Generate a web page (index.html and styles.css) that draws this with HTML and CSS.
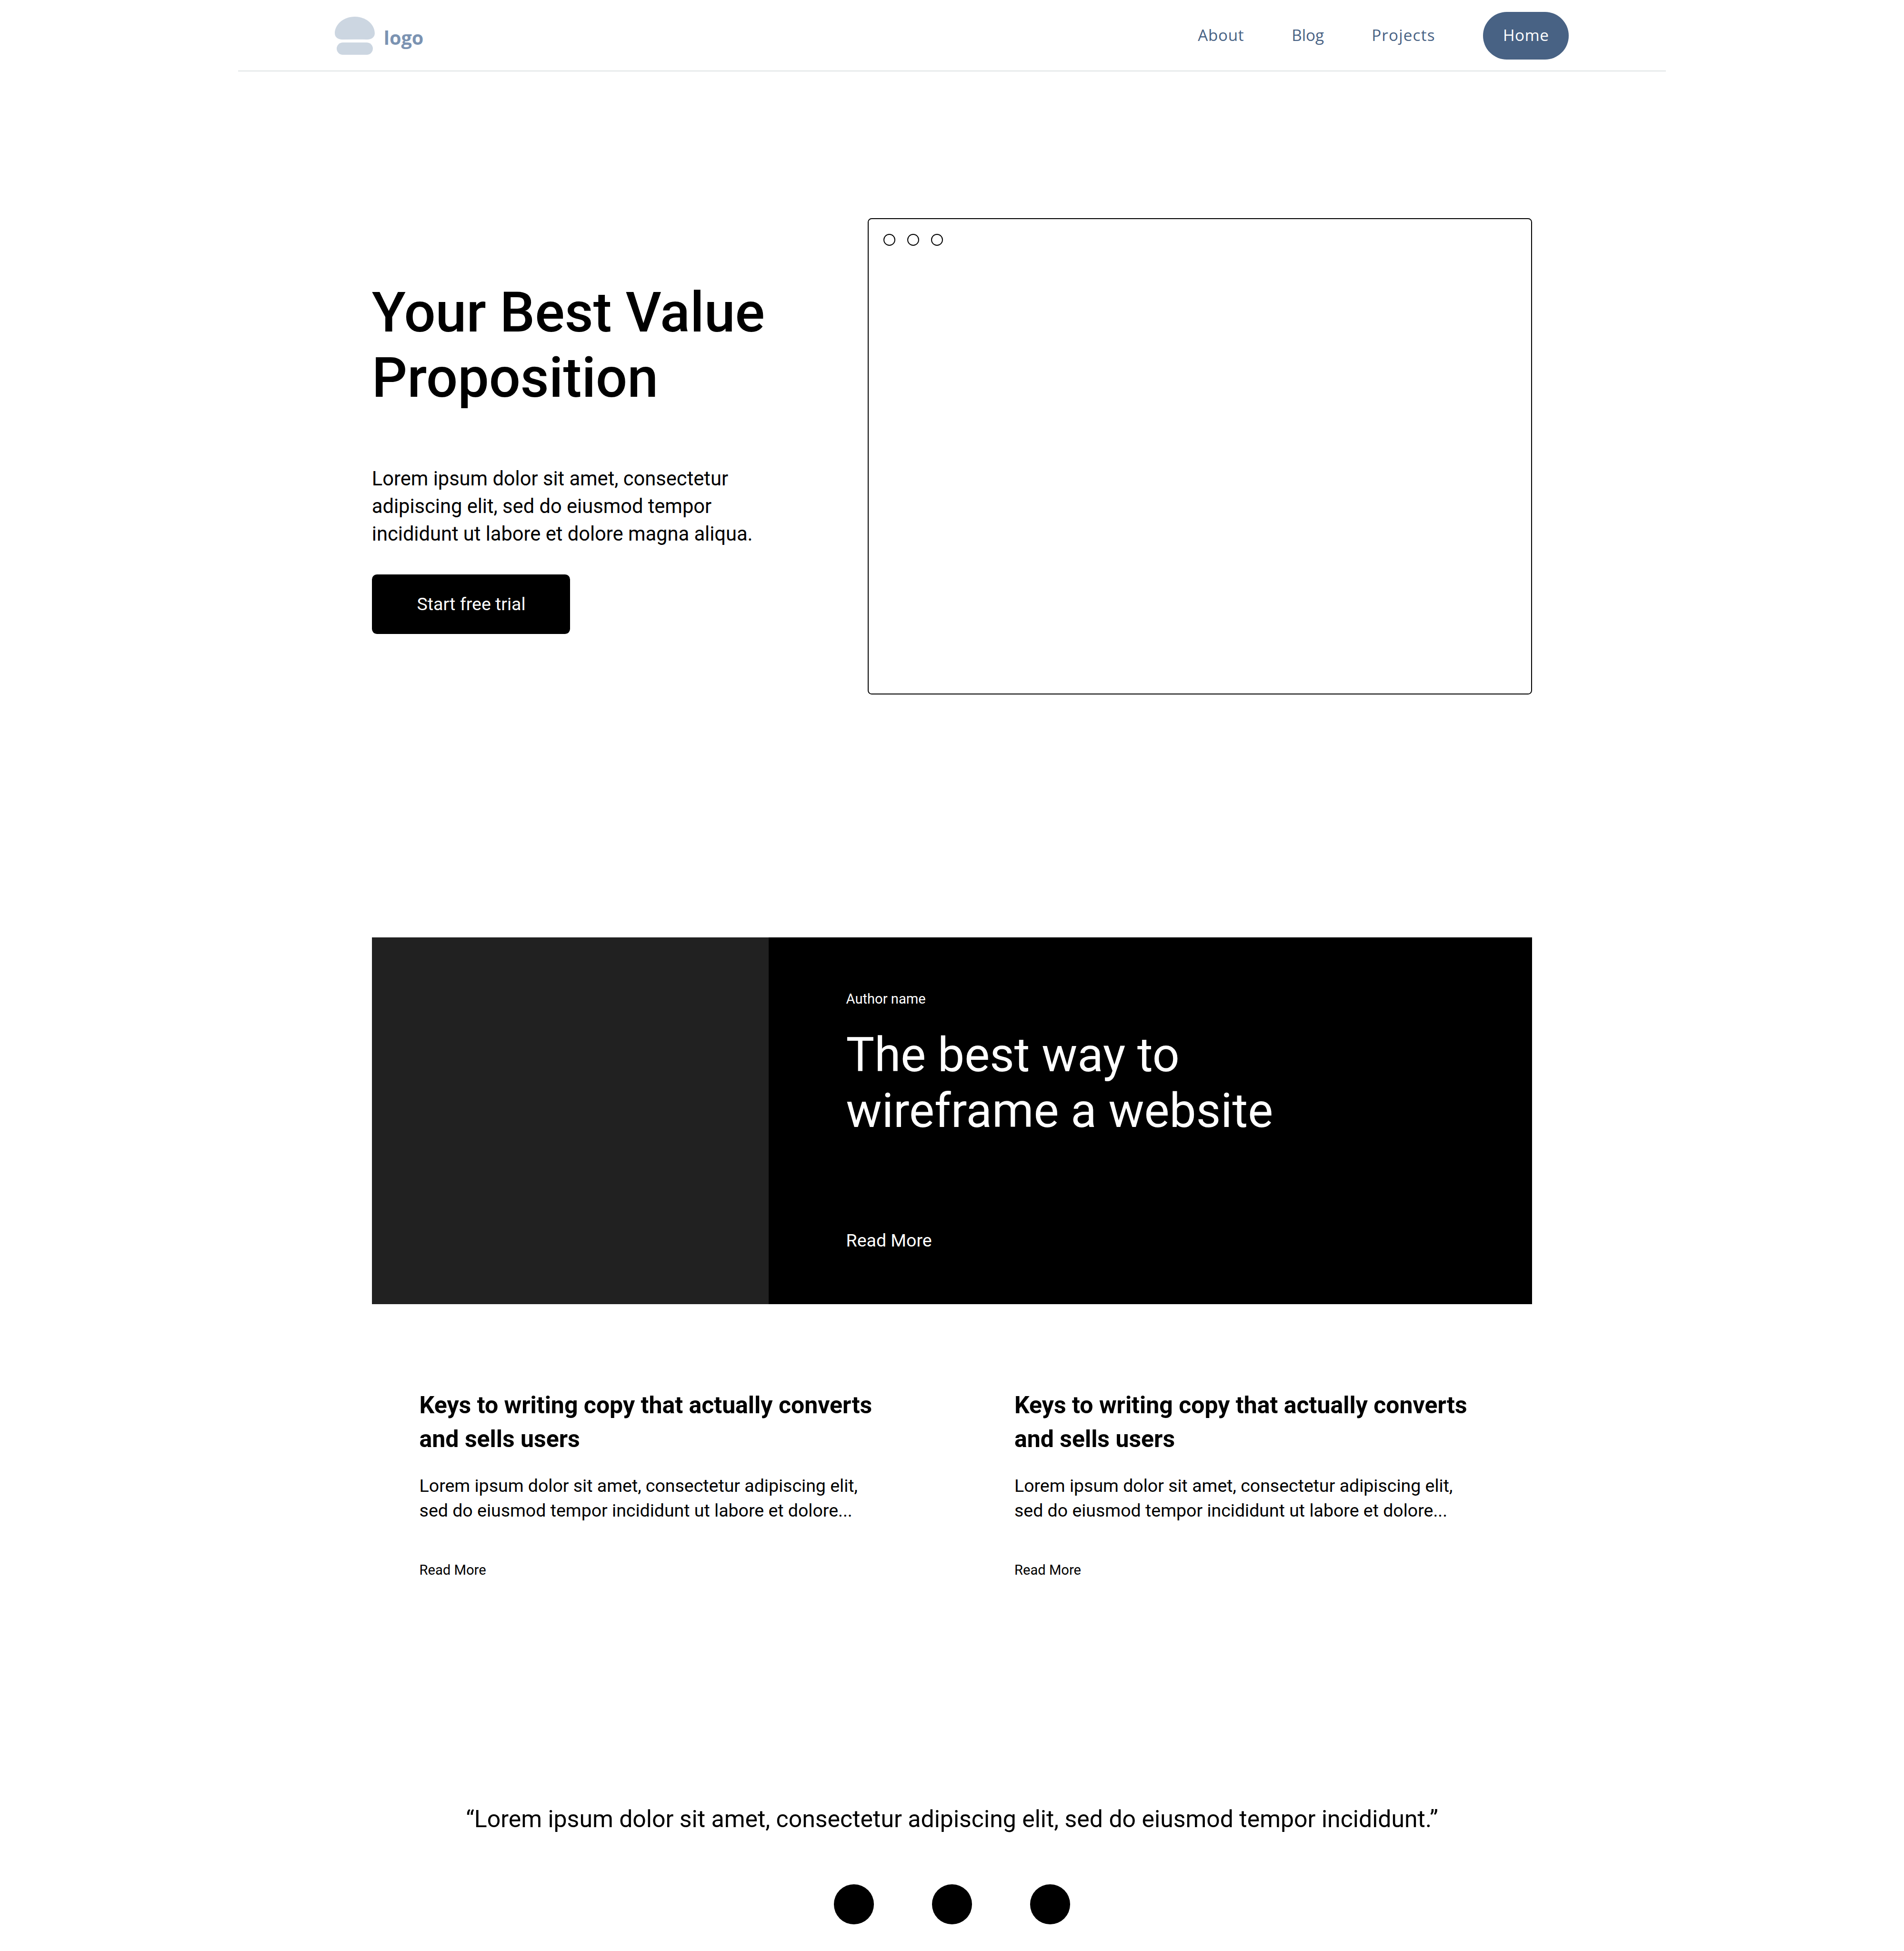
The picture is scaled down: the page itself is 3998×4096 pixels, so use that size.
FILE: index.html
```html
<!DOCTYPE html>
<html lang="en">
<head>
<meta charset="utf-8">
<title>Wireframe landing page</title>
<link rel="stylesheet" href="styles.css">
</head>
<body>
<header class="header">
  <a class="logo">
    <svg class="logo-mark" viewBox="0 0 84 80" aria-hidden="true"><path d="M42 0C65 0 84 16 84 35C84 43 77.500 48 68 48Q42 47.500 16 48C6.500 48 0 43 0 35C0 16 19 0 42 0Z"/><rect x="4" y="54.300" width="76" height="25.700" rx="12.850"/></svg>
    <span class="logo-text">logo</span>
  </a>
  <nav class="nav">
    <a class="nav-link nav-link-about">About</a>
    <a class="nav-link nav-link-blog">Blog</a>
    <a class="nav-link nav-link-projects">Projects</a>
    <a class="nav-link nav-link-active">Home</a>
  </nav>
</header>
<main class="main">
  <section class="hero">
    <div class="hero-copy">
      <h1 class="hero-title">Your Best Value<br>Proposition</h1>
      <p class="hero-text">Lorem ipsum dolor sit amet, consectetur<br>adipiscing elit, sed do eiusmod tempor<br>incididunt ut labore et dolore magna aliqua.</p>
      <a class="button">Start free trial</a>
    </div>
    <div class="window">
      <span class="window-dot"></span><span class="window-dot"></span><span class="window-dot"></span>
    </div>
  </section>
  <article class="banner">
    <div class="banner-image"></div>
    <div class="banner-body">
      <p class="small">Author name</p>
      <h2 class="banner-title">The best way to<br>wireframe a website</h2>
      <a class="banner-link">Read More</a>
    </div>
  </article>
  <section class="cards">
    <article class="card">
      <h3 class="card-title">Keys to writing copy that actually converts<br>and sells users</h3>
      <p class="card-text">Lorem ipsum dolor sit amet, consectetur adipiscing elit,<br>sed do eiusmod tempor incididunt ut labore et dolore...</p>
      <a class="small">Read More</a>
    </article>
    <article class="card">
      <h3 class="card-title">Keys to writing copy that actually converts<br>and sells users</h3>
      <p class="card-text">Lorem ipsum dolor sit amet, consectetur adipiscing elit,<br>sed do eiusmod tempor incididunt ut labore et dolore...</p>
      <a class="small">Read More</a>
    </article>
  </section>
  <section class="testimonial">
    <p class="quote">“Lorem ipsum dolor sit amet, consectetur adipiscing elit, sed do eiusmod tempor incididunt.”</p>
    <div class="avatars"><span class="avatar"></span><span class="avatar"></span><span class="avatar"></span></div>
  </section>
</main>
</body>
</html>
```
FILE: styles.css
```css
/* 1rem = 10px of the 1920px-wide design */
html { font-size: calc(100vw / 192); }
* { box-sizing: border-box; }
body {
  margin: 0;
  background: #fff;
  color: #000;
  font-family: Roboto, sans-serif;
  height: 100vh;
  overflow: hidden;
}
h1, h2, h3, p { margin: 0; }
h1, h2, h3, p, a { white-space: nowrap; }

.header {
  width: 144rem;
  height: 7.2rem;
  margin: 0 auto;
  padding: .1rem 9.8rem 0 9.77rem;
  display: flex;
  align-items: center;
  justify-content: space-between;
  border-bottom: 2px solid #dfe3e4;
  font-family: "Open Sans", sans-serif;
}
.logo { display: flex; align-items: center; gap: .9rem; }
.logo-mark { width: 4.03rem; height: 3.84rem; fill: #ccd6e1; }
.logo-text {
  padding-top: .36rem;
  color: #7b93b2;
  font-size: 1.9rem;
  font-weight: 700;
  line-height: 2.6rem;
}
.nav { display: flex; align-items: center; gap: 4.8rem; }
.nav-link {
  padding-bottom: .1rem;
  color: #486284;
  font-size: 1.6rem;
  line-height: 2.4rem;
  letter-spacing: .03rem;
}
.nav-link-blog { letter-spacing: 0; }
.nav-link-projects { margin-right: .03rem; letter-spacing: .055rem; }
.nav-link-active {
  padding: 1.15rem 2rem 1.25rem;
  border-radius: 2.4rem;
  background: #486284;
  color: #fff;
}

.main { width: 117rem; margin: 0 auto; }

.hero {
  height: 87.3rem;
  padding-top: 14.8rem;
  display: flex;
  align-items: flex-start;
  justify-content: space-between;
}
.hero-copy { padding-top: 6.22rem; }
.hero-title { font-size: 5.6rem; font-weight: 500; line-height: 6.6rem; }
.hero-text { margin: 5.43rem 0 2.66rem; font-size: 2rem; line-height: 2.8rem; }
.button {
  width: 20rem;
  height: 6rem;
  padding-left: .05rem;
  display: flex;
  align-items: center;
  justify-content: center;
  border-radius: .5rem;
  background: #000;
  color: #fff;
  font-size: 1.8rem;
}
.window {
  width: 67rem;
  height: 48rem;
  padding: 1.5rem;
  display: flex;
  gap: 1.2rem;
  border: 2px solid #000;
  border-radius: .4rem;
}
.window-dot { width: 1.2rem; height: 1.2rem; border: 2px solid #000; border-radius: 50%; }

.banner { height: 37rem; display: flex; background: #000; color: #fff; }
.banner-image { width: 40rem; background: #212121; }
.banner-body { padding: 5.26rem 0 0 7.82rem; }
.small { display: block; font-size: 1.4rem; line-height: 2rem; }
.banner-title { margin: 1.84rem 0 8.98rem; font-size: 4.8rem; font-weight: 400; line-height: 5.6rem; }
.banner-link { display: block; font-size: 1.8rem; line-height: 2.6rem; }

.cards {
  padding: 8.5rem 0 0 4.79rem;
  display: grid;
  grid-template-columns: 60rem auto;
}
.card-title { font-size: 2.4rem; font-weight: 700; line-height: 3.4rem; }
.card-text { margin: 1.76rem 0 3.78rem; font-size: 1.8rem; line-height: 2.5rem; }

.testimonial { margin-top: 22.37rem; text-align: center; }
.quote { font-size: 2.4rem; line-height: 3.4rem; }
.avatars { margin-top: 4.89rem; display: flex; justify-content: center; gap: 5.9rem; }
.avatar { width: 4rem; height: 4rem; border-radius: 50%; background: #000; }
```
